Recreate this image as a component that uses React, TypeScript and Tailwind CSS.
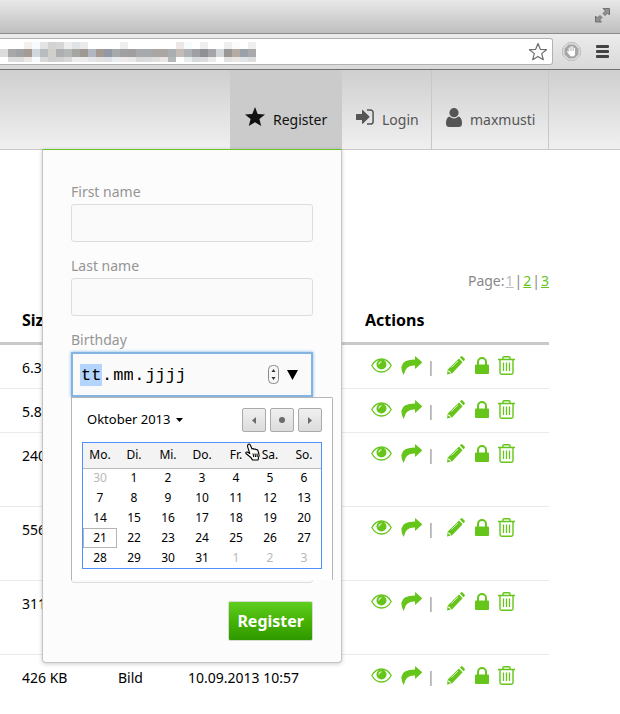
import React from "react";

const urlBlocks: string[][] = [
  "fff fff fff f5f0ee f8fbfd e4e4e4 d3d3d3 d6d6d6 ededed dfe4e6 ebebeb fff fff fff fff eeefef fff fff fff fff fff fff ede8e6 f7fbfd fff efefef fff fff efefef fbfbfb fff efeff0".split(" "),
  "dcdcdc a9a7a9 a0a2a3 a49b94 cfd8df b8bcbe d2ceca adafb0 b4b7b8 a6a6a1 9e9992 b0b7c0 a59a93 9397a6 a7aaac a09fa1 a09e9f a7aaac a7aaac aaa6a4 aaa6a4 a9afb1 c3bbb6 adb2b5 9da1a4 8f9095 a5a4a9 d1d4d9 989796 b4aaa4 9aa2a9 a9a9ab".split(" "),
  "fff dddddd dcdcdc ece6e4 f8fbfd d9d9da cfcfcf d1d1d1 d8d8d8 ededed ececec e4e5e8 e2e2e2 dedfe6 e9edf0 f0e9ea e8e8e8 dadada d9dbdc dfdfdf ebe6e5 b3b8ba fff eaeded d8dbdc dcdcde ebebeb fff e2e2e2 ebe6e5 dfe4e6 dddddd".split(" "),
];
const blockRowHeights = ["h-[7px]", "h-2", "h-[5px]"];

function BrowserChrome() {
  return (
    <div>
      <div className="flex h-[34px] items-center justify-end border-b border-[#8c8a8c] bg-linear-to-b from-[#e8e8e8] to-[#bfbfbf] pr-2.5">
        <button aria-label="Full screen" className="-mt-0.5">
          <svg className="block h-[15px] w-[15px]" viewBox="0 0 15 15" fill="#909090" stroke="#707070" strokeWidth="1">
            <path d="M8 .5h6.500v6.500l-2-2-2.500 2.500-2-2 2.500-2.500zM.5 8l2 2 2.500-2.500 2 2-2.500 2.500 2 2h-6z" />
          </svg>
        </button>
      </div>
      <div className="flex h-9 items-center border-b border-[#707070] bg-linear-to-b from-[#ececec] to-[#d9d9d9]">
        <div className="flex h-[27px] flex-1 items-center justify-between rounded-r-[3px] border border-l-0 border-[#b2b2b2] bg-white pr-1">
          <div aria-hidden="true">
            {urlBlocks.map((row, r) => (
              <div key={r} className="flex">
                {row.map((c, i) => (
                  <span key={i} className={`block w-2 ${blockRowHeights[r]}`} style={{ backgroundColor: "#" + c }} />
                ))}
              </div>
            ))}
          </div>
          <button aria-label="Bookmark">
            <svg className="block h-5 w-5" viewBox="0 0 20 20" fill="#fff" stroke="#6d6d6d" strokeWidth="1.200" strokeLinejoin="round">
              <path d="M10 1.500l2.300 5.800 6.200.4-4.800 3.900 1.600 6.100L10 14.400l-5.300 3.300 1.600-6.100L1.500 7.700l6.200-.4z" />
            </svg>
          </button>
        </div>
        <button aria-label="Ad blocker" className="ml-[9px]">
          <svg className="block h-[19px] w-[19px]" viewBox="0 0 19 19">
            <path d="M5.900.8h7.200l5.100 5.100v7.200l-5.100 5.100H5.900L.8 13.100V5.900z" fill="#e6e6e6" stroke="#b5b5b5" />
            <path d="M6.500 2.500h6l4 4v6l-4 4h-6l-4-4v-6z" fill="#a6a6a6" />
            <path d="M7.200 10V6M9 9V4.500M10.800 9V4.800M12.500 10V6.200M5.500 9.500l1.500 2" stroke="#fff" strokeWidth="1.100" strokeLinecap="round" />
            <path d="M6.700 9h6.300v2.500q0 3-2.800 3-2.500 0-3.500-3z" fill="#fff" />
          </svg>
        </button>
        <button aria-label="Menu" className="mr-[11px] ml-[15px] flex flex-col gap-0.5">
          <span className="block h-[3px] w-[13px] rounded-[1px] bg-[#444]" />
          <span className="block h-[3px] w-[13px] rounded-[1px] bg-[#444]" />
          <span className="block h-[3px] w-[13px] rounded-[1px] bg-[#444]" />
        </button>
      </div>
    </div>
  );
}

const StarIcon = () => (
  <svg className="block h-5 w-5" viewBox="0 0 20 20" fill="currentColor">
    <path d="M10 0l2.700 6.900 7.300.5-5.600 4.700L16.200 19 10 15.200 3.800 19l1.800-6.900L0 7.400l7.300-.5z" />
  </svg>
);

const LoginIcon = () => (
  <svg className="block h-4 w-[18px]" viewBox="0 0 18 16" fill="currentColor">
    <path d="M0 5.500Q0 5 .5 5H6V1.600Q6 .3 7 1.200l6.200 6q.7.700 0 1.400l-6.200 6q-1 .9-1-.4V11H.5Q0 11 0 10.500z" />
    <path d="M11 .9h3.500a2.600 2.600 0 0 1 2.600 2.600v9a2.600 2.600 0 0 1-2.600 2.600H11" fill="none" stroke="currentColor" strokeWidth="1.500" />
  </svg>
);

const UserIcon = () => (
  <svg className="block h-[19px] w-4" viewBox="0 0 16 19" fill="currentColor">
    <circle cx="8" cy="4.700" r="4.600" />
    <path d="M3.500 8.500Q0 9.500 0 15.500 0 19 3.500 19h9q3.500 0 3.500-3.500 0-6-3.500-7Q8 12.500 3.500 8.500z" />
  </svg>
);

const EyeIcon = () => (
  <svg className="block h-[15px] w-[21px]" viewBox="0 0 21 15" fill="none" stroke="currentColor">
    <path d="M.8 7.500Q4.500 1 10.500 1t9.700 6.500Q16.500 14 10.500 14T.8 7.500z" strokeWidth="1.300" />
    <circle cx="10.500" cy="6.500" r="5" fill="currentColor" stroke="none" />
    <path d="M7.800 6.500q0-2.700 2.700-2.700" stroke="#fff" strokeWidth="1" />
  </svg>
);

const ShareIcon = () => (
  <svg className="block h-[19px] w-[21px]" viewBox="0 0 21 19" fill="currentColor">
    <path d="M14 .6q0-.8.7-.2l6 5.400q.6.600 0 1.200l-6 5.500q-.7.500-.7-.3V9.500Q4.500 9 3 18.200q-.3.900-.8 0Q0 13.500.5 10.500 1.500 3.500 14 3.500z" />
  </svg>
);

const PencilIcon = () => (
  <svg className="block h-[19px] w-[18px]" viewBox="0 0 18 19" fill="currentColor">
    <path d="M12.900 1.500l1-1q.8-.8 1.600 0l2 2.100q.7.800 0 1.600l-1 1zM12 2.500l3.600 3.700L5.200 17.300 0 18.500l.8-5z" />
    <path d="M4.500 11.500L11 5" stroke="#fff" strokeWidth=".7" />
    <path d="M1.500 14.500v1h1.500v1.500h1" stroke="#fff" strokeWidth=".9" fill="none" />
  </svg>
);

const LockIcon = () => (
  <svg className="block h-[17px] w-3.5" viewBox="0 0 14 17">
    <rect y="7.500" width="14" height="9.500" rx="1" fill="currentColor" />
    <path d="M3 8V5a4 4 0 0 1 8 0v3" fill="none" stroke="currentColor" strokeWidth="2" />
  </svg>
);

const TrashIcon = () => (
  <svg className="block h-[19px] w-[17px]" viewBox="0 0 17 19" fill="none" stroke="currentColor" strokeWidth="1.400">
    <path d="M0 3.500h17M5 3.200V1.700q0-1 1-1h5q1 0 1 1v1.500M2 3.500v13q0 1.700 1.700 1.700h9.600q1.700 0 1.700-1.700v-13" />
    <path d="M5.500 6.500v8.500M8.500 6.500v8.500M11.500 6.500v8.500" strokeWidth="1.300" />
  </svg>
);

const weeks = [
  [30, 1, 2, 3, 4, 5, 6],
  [7, 8, 9, 10, 11, 12, 13],
  [14, 15, 16, 17, 18, 19, 20],
  [21, 22, 23, 24, 25, 26, 27],
  [28, 29, 30, 31, 1, 2, 3],
];
const weekdays = ["Mo.", "Di.", "Mi.", "Do.", "Fr.", "Sa.", "So."];

function dayClass(week: number, day: number) {
  if ((week === 0 && day > 7) || (week === 4 && day < 7)) return "text-[#b8b8b8]";
  if (week === 3 && day === 21) return "outline outline-1 -outline-offset-1 outline-[#b5b5b5]";
  return "";
}

const navButton =
  "flex h-6 w-6 items-center justify-center rounded-[2px] border border-[#aaa] bg-linear-to-b from-[#f0f0f0] to-[#dcdcdc]";

function Calendar() {
  return (
    <div className="absolute top-full left-0 z-10 h-[183px] w-[262px] rounded-tr-[2px] border border-b-0 border-[#b5b5b5] bg-white px-2.5 pt-2.5 text-xs text-black">
      <div className="flex items-center gap-1 pl-[5px]">
        <button type="button" className="mr-auto flex items-center gap-1.5 text-[13px]">
          Oktober 2013
          <svg className="h-1 w-[7px]" viewBox="0 0 7 4"><path d="M0 0h7L3.500 4z" /></svg>
        </button>
        <button type="button" aria-label="Previous month" className={navButton}>
          <svg className="h-[7px] w-1" viewBox="0 0 4 7" fill="#6b6b6b"><path d="M4 0v7L0 3.500z" /></svg>
        </button>
        <button type="button" aria-label="Today" className={navButton}>
          <span className="h-1.5 w-1.5 rounded-full bg-[#6b6b6b]" />
        </button>
        <button type="button" aria-label="Next month" className={navButton}>
          <svg className="h-[7px] w-1" viewBox="0 0 4 7" fill="#6b6b6b"><path d="M0 0v7l4-3.500z" /></svg>
        </button>
      </div>
      <div className="relative mt-2.5 border border-[#4d90fe]">
        <table className="w-full table-fixed border-collapse text-center">
          <thead>
            <tr className="h-[25px] border-b border-[#bbb] bg-[#f3f3f3]">
              {weekdays.map((d) => <th key={d} className="p-0 font-normal">{d}</th>)}
            </tr>
          </thead>
          <tbody>
            {weeks.map((w, i) => (
              <tr key={i} className="h-5">
                {w.map((d) => <td key={d} className={`p-0 ${dayClass(i, d)}`}>{d}</td>)}
              </tr>
            ))}
          </tbody>
        </table>
        <svg className="absolute top-0 left-[162px] h-[18px] w-4" viewBox="0 0 16 18" fill="#fff" stroke="#000" strokeWidth="1.100" strokeLinejoin="round">
          <path d="M3 1.500Q4.500.3 5.300 2l1.700 4q1-1 2 .3 1.200-.9 2.100.5 1.500-.5 1.900 1l1 3.700q.3 1.500-.5 3l-.4 2.500H7.500Q6.500 14.500 4 13L1 10.500Q.3 8.800 2.300 9l2.500 1.500L2.500 3.300z" />
          <path d="M8 10.500l.7 3.500M10 10.500l.5 3.500M12 10.500l.2 3.500" />
        </svg>
      </div>
    </div>
  );
}

const inputClass = "mt-0.5 block h-[38px] w-full rounded-[3px] border border-[#ddd] bg-[#fafafa] px-2 text-black";
const segment = "h-[22px] p-0 px-px pt-0.5 outline-none";

function RegisterPanel() {
  return (
    <form
      onSubmit={(e) => e.preventDefault()}
      className="absolute top-full right-0 z-10 w-[300px] rounded-b-[4px] border border-[#c4c4c4] border-t-[#68c41e] bg-[#fcfcfc] px-7 pt-8 pb-[21px] text-sm leading-5 text-[#959595] shadow-[0_1px_4px_rgba(0,0,0,0.2)]"
    >
      <label htmlFor="first" className="block">First name</label>
      <input id="first" className={inputClass} />
      <label htmlFor="last" className="mt-3.5 block">Last name</label>
      <input id="last" className={inputClass} />
      <label htmlFor="day" className="mt-3.5 block">Birthday</label>
      <div className="relative mt-0.5">
        <div className="flex h-[45px] items-center border-2 border-[#86b4e2] bg-[#fafafa] pr-[13px] pl-[7px] font-['Liberation_Mono',monospace] text-[17px] text-black shadow-[0_0_3px_#7fb2e5]">
          <input id="day" defaultValue="tt" className={`${segment} w-[22px] bg-[#b3d4fd]`} />
          <span className="pt-0.5">.</span>
          <input aria-label="Month" defaultValue="mm" className={`${segment} w-[22px] bg-transparent`} />
          <span className="pt-0.5">.</span>
          <input aria-label="Year" defaultValue="jjjj" className={`${segment} w-[43px] bg-transparent`} />
          <button type="button" aria-label="Step date" className="ml-auto">
            <svg className="block h-[19px] w-[11px]" viewBox="0 0 11 19" fill="#f7f7f7" stroke="#8a8a8a">
              <rect x=".5" y=".5" width="10" height="18" rx="4" />
              <path d="M3.500 7h4l-2-3zM3.500 12h4l-2 3z" fill="#333" stroke="none" />
            </svg>
          </button>
          <button type="button" aria-label="Open calendar" className="ml-2">
            <svg className="block h-2.5 w-[11px]" viewBox="0 0 11 10"><path d="M0 0h11L5.500 10z" /></svg>
          </button>
        </div>
        <Calendar />
      </div>
      <textarea aria-label="Notes" className="mt-8 block h-[154px] w-full resize-none rounded-[3px] border border-[#ddd] bg-[#fafafa]" />
      <div className="mt-[18px] flex justify-end">
        <button className="h-10 rounded-[2px] border border-[#d5dcd0] bg-linear-to-b from-[#5fce1e] via-[#46b303] to-[#2e9900] px-2 text-base font-bold text-white">
          Register
        </button>
      </div>
    </form>
  );
}

function Header() {
  const item = "flex h-full items-center pt-[21px]";
  return (
    <header className="h-20 border-b border-[#c8c8c8] bg-linear-to-b from-[#cfcfcf] to-[#f0f0f0] pr-[71px] text-sm text-[#555]">
      <nav className="flex h-full justify-end">
        <div className="relative h-full">
          <a href="#register" className={`${item} w-28 gap-2 bg-[#cbcbcb] pl-[15px] text-[#111]`}>
            <span className="-mt-1.5"><StarIcon /></span>Register
          </a>
          <RegisterPanel />
        </div>
        <a href="#login" className={`${item} w-[90px] gap-2 border-r border-[#c8c8c8] pl-3.5`}>
          <span className="-mt-1.5"><LoginIcon /></span>Login
        </a>
        <a href="#account" className={`${item} w-[117px] gap-2 border-r border-[#c8c8c8] pl-3.5`}>
          <span className="-mt-1.5"><UserIcon /></span>maxmusti
        </a>
      </nav>
    </header>
  );
}

function Actions() {
  return (
    <div className="flex h-5 items-center pl-1.5 text-[#66c51b]">
      <button aria-label="View"><EyeIcon /></button>
      <button aria-label="Share" className="ml-[9px]"><ShareIcon /></button>
      <span className="mt-1 ml-[5px] w-[6px] text-[#888]">|</span>
      <button aria-label="Edit" className="ml-[14px]"><PencilIcon /></button>
      <button aria-label="Lock" className="ml-2.5"><LockIcon /></button>
      <button aria-label="Delete" className="ml-[9px]"><TrashIcon /></button>
    </div>
  );
}

const files = [
  { size: "6.3", height: "h-11" },
  { size: "5.8", height: "h-11" },
  { size: "240", height: "h-[74px]" },
  { size: "556", height: "h-[74px]" },
  { size: "311", height: "h-[74px]" },
  { size: "426 KB", type: "Bild", date: "10.09.2013 10:57", height: "h-[59px]", last: true },
];

export default function App() {
  return (
    <div className="overflow-hidden bg-white font-['Noto_Sans',sans-serif] text-black">
      <BrowserChrome />
      <Header />
      <main className="pt-[121px] pr-[71px] text-sm leading-5">
        <p className="flex justify-end gap-px text-[#888]">
          <span>Page:</span>
          <a href="#1" className="text-[#bbb] underline">1</a>
          <span>|</span>
          <a href="#2" className="text-[#66c51b] underline">2</a>
          <span>|</span>
          <a href="#3" className="text-[#66c51b] underline">3</a>
        </p>
        <table className="mt-[15px] w-full table-fixed border-separate border-spacing-0 text-left">
          <colgroup>
            <col className="w-[118px]" />
            <col className="w-[70px]" />
            <col className="w-[177px]" />
            <col />
          </colgroup>
          <thead>
            <tr className="h-[39px] text-base font-bold">
              <th className="border-b-3 border-[#c9c9c9] p-0 pb-2 pl-[22px]">Size</th>
              <td className="border-b-3 border-[#c9c9c9]" />
              <td className="border-b-3 border-[#c9c9c9]" />
              <th className="border-b-3 border-[#c9c9c9] p-0 pb-2">Actions</th>
            </tr>
          </thead>
          <tbody>
            {files.map((f) => {
              const line = f.last ? "" : "border-b border-[#ebebeb]";
              return (
                <tr key={f.size} className={`${f.height} align-top`}>
                  <td className={`p-0 pt-[13px] pl-[22px] ${line}`}>{f.size}</td>
                  <td className={`p-0 pt-[13px] ${line}`}>{f.type}</td>
                  <td className={`p-0 pt-[13px] ${line}`}>{f.date}</td>
                  <td className={`p-0 pt-2.5 ${line}`}><Actions /></td>
                </tr>
              );
            })}
          </tbody>
        </table>
      </main>
    </div>
  );
}
